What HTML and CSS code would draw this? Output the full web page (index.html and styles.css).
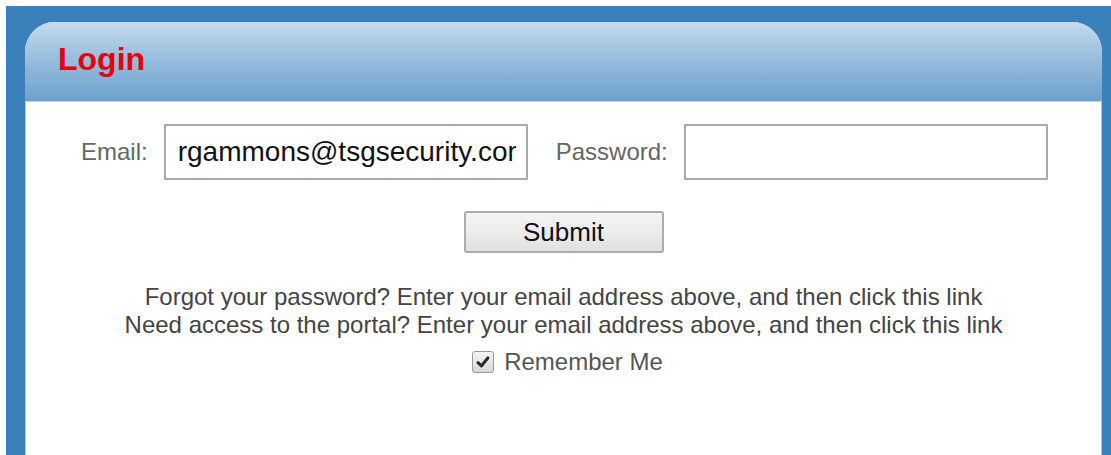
FILE: index.html
```html
<!DOCTYPE html>
<html lang="en">
<head>
<meta charset="utf-8">
<title>Login</title>
<link rel="stylesheet" href="styles.css">
</head>
<body>
<div class="frame">
  <div class="panel">
    <div class="panel-head">
      <h1 class="panel-title">Login</h1>
    </div>
    <form class="panel-body" onsubmit="return false;">
      <div class="fields">
        <label class="field-label" for="email">Email:</label>
        <input class="field-input" id="email" type="text" value="rgammons@tsgsecurity.com">
        <label class="field-label pw-label" for="password">Password:</label>
        <input class="field-input" id="password" type="password">
      </div>
      <div class="actions">
        <button class="submit-btn" type="submit">Submit</button>
      </div>
      <div class="help">
        <p class="help-line">Forgot your password? Enter your email address above, and then click this link</p>
        <p class="help-line">Need access to the portal? Enter your email address above, and then click this link</p>
        <label class="remember">
          <span class="check-box">
            <svg viewBox="0 0 16 16" width="16" height="16"><path d="M3 8.6 L6.4 12 L13 3.8" fill="none" stroke="#2a2a2a" stroke-width="3" stroke-linecap="round" stroke-linejoin="round"/></svg>
          </span>
          <span class="remember-text">Remember Me</span>
        </label>
      </div>
    </form>
  </div>
</div>
</body>
</html>
```
FILE: styles.css
```css
html, body {
  margin: 0;
  padding: 0;
  background: #ffffff;
}

body {
  font-family: "Liberation Sans", Arial, sans-serif;
  padding: 6px 0 0 6px;
  height: 455px;
  box-sizing: border-box;
  overflow: hidden;
}

.frame {
  background: #3a80ba;
  width: 1105px;
  height: 449px;
  box-sizing: border-box;
  padding: 16px 9px 0 19px;
}

.panel {
  background: #ffffff;
  border-radius: 30px 30px 0 0;
  height: 100%;
  overflow: hidden;
  box-shadow: inset 1px 0 0 #a8c8e4, inset -1px 0 0 #a8c8e4;
}

.panel-head {
  height: 79px;
  background: linear-gradient(to bottom, #c4dbec 0%, #99bfde 45%, #6ca0cd 100%);
  border-bottom: 1px solid #b9d2e7;
  padding-left: 33px;
  display: flex;
  align-items: center;
}

.panel-title {
  margin: 0;
  color: #e8000b;
  font-size: 32px;
  font-weight: bold;
  line-height: 1;
  padding-bottom: 6px;
}

.panel-body {
  display: flex;
  flex-direction: column;
  align-items: center;
}

.fields {
  display: flex;
  align-items: center;
  margin-top: 22px;
  margin-left: 56px;
  align-self: flex-start;
}

.field-label {
  color: #666666;
  font-size: 24px;
}

.pw-label {
  margin-left: 28px;
}

.field-input {
  width: 364px;
  height: 56px;
  box-sizing: border-box;
  border: 2px solid #a9a9a9;
  margin-left: 16px;
  padding: 0 10px 0 12px;
  font-family: "Liberation Sans", Arial, sans-serif;
  font-size: 28px;
  color: #111111;
  background: #ffffff;
  outline: none;
}

.actions {
  margin-top: 31px;
}

.submit-btn {
  width: 200px;
  height: 42px;
  font-family: "Liberation Sans", Arial, sans-serif;
  font-size: 26px;
  color: #111111;
  border: 2px solid #acacac;
  border-radius: 3px;
  background: linear-gradient(to bottom, #f3f3f3 0%, #ececec 50%, #e0e0e0 100%);
  padding: 0;
  line-height: 1;
}

.help {
  margin-top: 30px;
  display: flex;
  flex-direction: column;
  align-items: center;
}

.help-line {
  margin: 0;
  color: #444444;
  font-size: 24px;
  line-height: 28px;
}

.remember {
  display: flex;
  align-items: center;
  margin-top: 9px;
  margin-left: 8px;
  gap: 10px;
}

.check-box {
  width: 22px;
  height: 22px;
  box-sizing: border-box;
  border: 1px solid #9a9a9a;
  border-radius: 3px;
  background: linear-gradient(to bottom, #f4f4f4, #d8d8d8);
  display: flex;
  align-items: center;
  justify-content: center;
}

.remember-text {
  color: #555555;
  font-size: 24px;
}
```
